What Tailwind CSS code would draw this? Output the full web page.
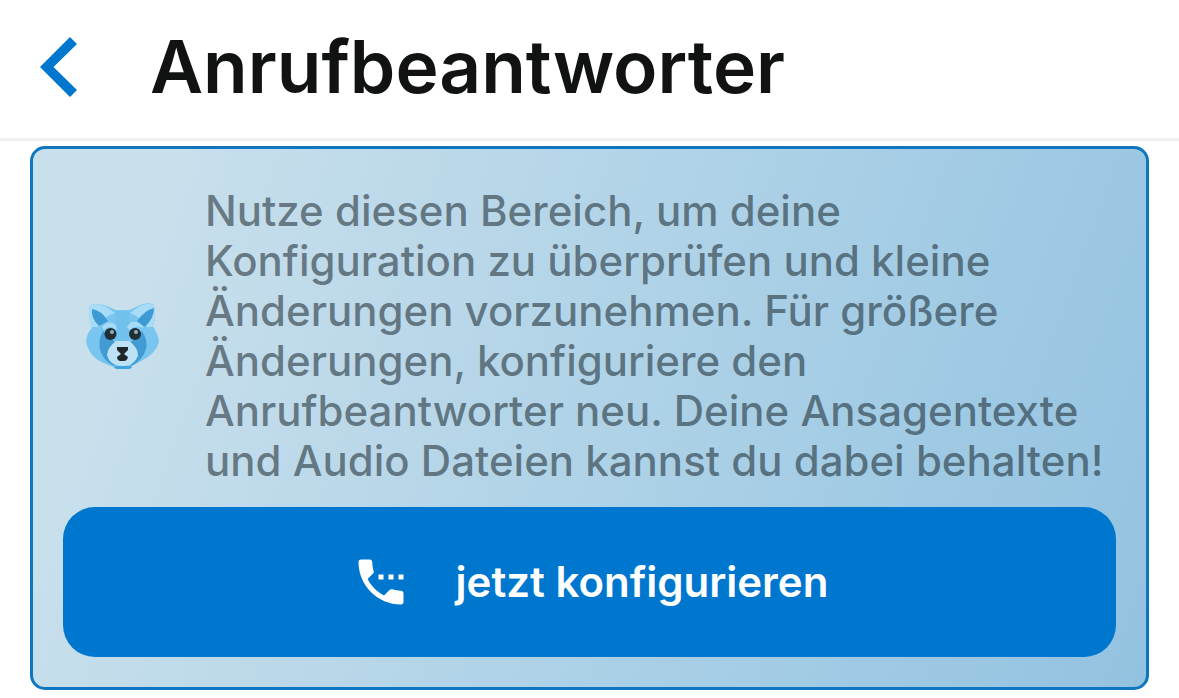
<!DOCTYPE html>
<html lang="de">
<head>
<meta charset="utf-8">
<meta name="viewport" content="width=device-width, initial-scale=1">
<title>Anrufbeantworter</title>
<script src="https://cdn.jsdelivr.net/npm/@tailwindcss/browser@4"></script>
</head>
<body class="min-h-screen bg-white font-['Inter','Liberation_Sans',sans-serif]">
<header class="flex h-[141px] items-center gap-[73px] border-b-[3px] border-[#f1f1f1] pl-10 pb-[5px]">
  <button type="button" aria-label="Zurück" class="shrink-0">
    <svg class="block h-[60px] w-[37px]" viewBox="0 0 37 60" fill="#0077cf" aria-hidden="true"><path d="M30 0 37 7 13.500 30 37 53 30 60 0 30z"/></svg>
  </button>
  <h1 class="text-[73px] leading-[90px] font-semibold text-[#111313]">Anrufbeantworter</h1>
</header>
<main class="px-[30px] pt-[5px]">
  <section class="rounded-[15px] border-[3px] border-[#0d76bf] bg-linear-[110deg] from-[#c8dfec] from-12% via-[#a5cde5] via-68% to-[#93c2e0] px-[30px] pt-[37px] pb-[30px]">
    <div class="flex items-center gap-[45px]">
      <svg class="ml-[22px] h-[66px] w-[75px] shrink-0" viewBox="0 0 75 66" role="img" aria-label="Waschbär">
        <path d="M5 2Q13-1 24 4l7 3h14l8-4q10-5 16-1 2 12-1 22 5 6 6 15-3 11-16 18l-9 5-6 3H31l-10-4Q4 55 1 38q1-8 6-13Q2 9 5 2z" fill="#78c5ef"/>
        <path d="M5 2q8-3 18 3l7 5q-10 2-17 14l-7 0Q2 11 5 2zM69 2q-9-3-17 3l-7 5q10 3 16 14l7 0Q71 12 69 2z" fill="#a9dcf6"/>
        <path d="M7 6q9 1 16 12l-9 5Q6 16 7 6zM69 5q-9 2-17 13l8 6q9-9 9-19z" fill="#3d9ad3"/>
        <path d="M18 28q-5 9-3 18 2 11 14 17l8-12-8-13zM57 28q6 9 4 18-3 11-15 17l-8-11 8-13z" fill="#429bd2"/>
        <path d="M30 8h14v31H30z" fill="#70c1ec"/>
        <path d="M17 24q7-8 14-2l1 5q-7-6-13 0zM42 25q4-10 13-4l4 4q-9-4-14 2z" fill="#a6dcf7"/>
        <path d="M31 38h13q9 6 9 15-4 10-15 10-13 0-16-11 1-8 9-14z" fill="#bee2f5"/>
        <path d="M30 63h16l1 2-3 1H32l-3-1z" fill="#42a4dc"/>
        <circle cx="25.500" cy="31" r="6" fill="#202e36"/><circle cx="50" cy="31" r="6" fill="#202e36"/>
        <circle cx="27" cy="29" r="2" fill="#95aebb"/><circle cx="51" cy="29" r="2" fill="#95aebb"/>
        <path d="M32 44h11v3l-4 4 4 3q-1 4-4 4h-4q-3-1-3-4l4-3-4-4z" fill="#20272b"/>
      </svg>
      <p class="text-[42px] leading-[50px] font-medium whitespace-nowrap text-[#0b171d]/52">Nutze diesen Bereich, um deine<br>Konfiguration zu überprüfen und kleine<br>Änderungen vorzunehmen. Für größere<br>Änderungen, konfiguriere den<br>Anrufbeantworter neu. Deine Ansagentexte<br>und Audio Dateien kannst du dabei behalten!</p>
    </div>
    <button type="button" class="mt-[21px] flex h-[150px] w-full items-center justify-center gap-[45px] rounded-[32px] bg-[#0077cf] text-[42px] leading-[50px] font-semibold text-white">
      <svg class="size-[60px] shrink-0" viewBox="0 0 24 24" fill="currentColor" aria-hidden="true"><path d="M11 9h2v2h-2V9zm4 0h2v2h-2V9zm5 6.500c-1.250 0-2.450-.2-3.570-.57-.35-.11-.74-.03-1.020.24l-2.200 2.200c-2.830-1.440-5.150-3.750-6.590-6.580l2.200-2.210c.28-.27.36-.66.25-1.010C8.700 6.450 8.500 5.250 8.500 4c0-.55-.45-1-1-1H4c-.55 0-1 .45-1 1 0 9.390 7.610 17 17 17 .55 0 1-.45 1-1v-3.500c0-.55-.45-1-1-1zM19 9v2h2V9h-2z"/></svg>
      <span>jetzt konfigurieren</span>
    </button>
  </section>
</main>
</body>
</html>
